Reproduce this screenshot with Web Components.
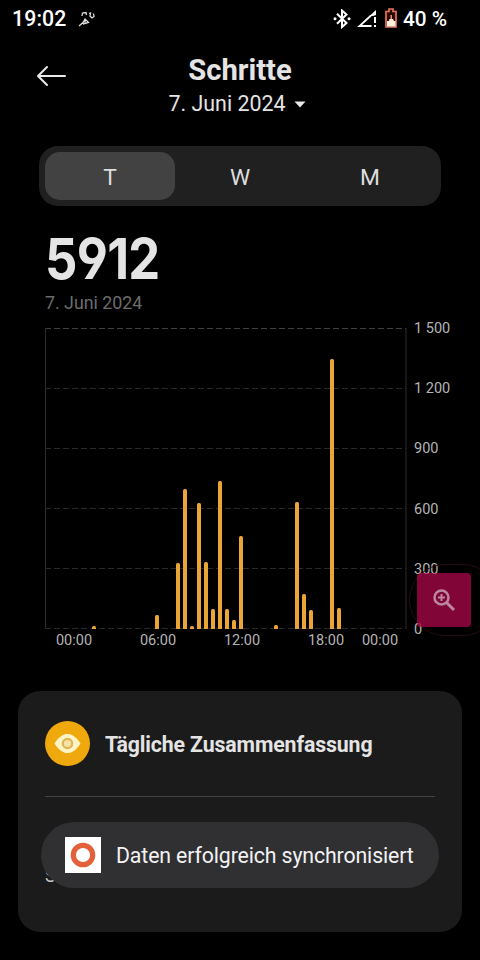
<!DOCTYPE html>
<html lang="de">
<head>
<meta charset="utf-8">
<title>Schritte</title>
<style>
  html, body { margin: 0; height: 100%; background: #000; overflow: hidden; }
  body { font-family: Roboto, "Liberation Sans", sans-serif; color: #e4e4e4; }
</style>
</head>
<body>
<steps-app></steps-app>

<script>
class StatusBar extends HTMLElement {
  constructor() {
    super();
    this.attachShadow({ mode: 'open' });
  }

  connectedCallback() {
    this.shadowRoot.innerHTML = `
      <style>
        :host {
          display: flex;
          align-items: center;
          justify-content: space-between;
          height: 38px;
          padding: 0 33px 0 12px;
          box-sizing: border-box;
          color: #fff;
          font-size: 21.3px;
          font-weight: 500;
          line-height: 38px;
        }
        div { display: flex; align-items: center; }
        .time { letter-spacing: 0.1px; }
        .run { margin-left: 11px; }
        .signal { margin: 0 8px 0 6px; }
        .battery { margin: -2px 6px 0 0; }
        .percent { font-size: 20.8px; }
        svg { display: block; }
      </style>
      <div>
        <span class="time">${this.getAttribute('time')}</span>
        <svg class="run" width="18" height="18" viewBox="0 0 18 18" fill="none" stroke="#ddd" stroke-width="1.3">
          <path d="M4 6L4.500 3L8 2.500L8.500 5M11 3.500L12.500 3L12 6L14 8L16 6.500L15.500 3.500M1 16L5 12.500L7 9L10.500 12.500L5 14M7 9V12.500"/>
        </svg>
      </div>
      <div>
        <svg width="18" height="20" viewBox="0 0 18 20" fill="none" stroke="#fff" stroke-width="2">
          <path d="M4 4.800L13.500 14L9 18V1.500L13.500 5.500L4 14.700"/>
          <circle cx="2" cy="9.800" r="1.500" fill="#fff" stroke="none"/>
          <circle cx="16" cy="9.800" r="1.500" fill="#fff" stroke="none"/>
        </svg>
        <svg class="signal" width="20" height="18" viewBox="0 0 20 18">
          <path d="M14 5.500L2.500 16H14.500" fill="none" stroke="#fff" stroke-width="1.800"/>
          <path d="M12.500 6L19 0V5L16 6ZM17 7H19V13H17ZM17 15H19V17H17Z" fill="#fff"/>
        </svg>
        <svg class="battery" width="12" height="20" viewBox="0 0 12 20">
          <path d="M1 3.500H4V1H8V3.500H11V19H1Z" fill="#2a0904" stroke="#e8745a" stroke-width="1.700"/>
          <path d="M2 13H4L4.500 11H6V9H7V11H8L9 13H10.500V18.500H2Z" fill="#fff0dc"/>
          <path d="M5.500 7H7V11H5.500Z" fill="#ee9078"/>
        </svg>
        <span class="percent">${this.getAttribute('battery')}</span>
      </div>
    `;
  }
}
customElements.define('status-bar', StatusBar);

class PageHeader extends HTMLElement {
  constructor() {
    super();
    this.attachShadow({ mode: 'open' });
  }

  connectedCallback() {
    this.shadowRoot.innerHTML = `
      <style>
        :host {
          display: grid;
          grid-template-columns: 70px 1fr 70px;
          height: 108px;
        }
        .back { display: block; margin: 27px 0 0 36px; }
        .titles { text-align: center; padding-top: 15px; }
        h1 { margin: 0; font-size: 29.2px; line-height: 34px; font-weight: 700; }
        .date {
          display: flex;
          align-items: center;
          justify-content: center;
          gap: 9px;
          padding: 1px 5px 0 0;
          font-size: 21.4px;
          line-height: 32px;
        }
      </style>
      <svg class="back" width="32" height="22" viewBox="0 0 32 22" fill="none" stroke="#e8e8e8" stroke-width="2" stroke-linecap="round" stroke-linejoin="round">
        <path d="M29 11H2M11 2L2 11L11 20"/>
      </svg>
      <div class="titles">
        <h1><slot></slot></h1>
        <div class="date">
          <slot name="date"></slot>
          <svg width="12" height="7" viewBox="0 0 12 7"><path d="M0.500 0.500H11.500L6 6.500Z" fill="#e8e8e8"/></svg>
        </div>
      </div>
    `;
  }
}
customElements.define('page-header', PageHeader);

class RangeTabs extends HTMLElement {
  constructor() {
    super();
    this.attachShadow({ mode: 'open' });
  }

  connectedCallback() {
    const tabs = this.getAttribute('tabs').split(',');
    this.shadowRoot.innerHTML = `
      <style>
        :host {
          display: grid;
          grid-template-columns: repeat(3, 1fr);
          height: 60px;
          margin: 0 39px;
          padding: 6px;
          box-sizing: border-box;
          border-radius: 19px;
          background: #202020;
          font-size: 22.8px;
          line-height: 51px;
          text-align: center;
          color: #ddd;
        }
        div { height: 48px; }
        .active { background: #424242; border-radius: 15px; }
      </style>
      ${tabs.map((t, i) => `<div class="${i === 0 ? 'active' : ''}">${t}</div>`).join('')}
    `;
  }
}
customElements.define('range-tabs', RangeTabs);

class StepTotal extends HTMLElement {
  constructor() {
    super();
    this.attachShadow({ mode: 'open' });
  }

  connectedCallback() {
    this.shadowRoot.innerHTML = `
      <style>
        :host { display: block; height: 122px; padding: 23px 45px 0; box-sizing: border-box; }
        .value {
          font-family: Inter, Roboto, sans-serif;
          font-size: 57px;
          font-weight: 700;
          font-feature-settings: "cv04", "ss01";
          line-height: 60px;
          letter-spacing: -0.8px;
          transform: scaleX(0.89);
          transform-origin: 0 0;
        }
        .date { font-size: 17.8px; line-height: 28px; color: #6c6c6c; }
      </style>
      <div class="value"><slot></slot></div>
      <div class="date"><slot name="date"></slot></div>
    `;
  }
}
customElements.define('step-total', StepTotal);

// bar heights in px, keyed by half-hour slot
const BARS = {
  3: 3.5, 12: 14.5, 15: 66, 16: 140, 17: 3.5, 18: 126, 19: 67, 20: 20,
  21: 148.5, 22: 20.5, 23: 9.5, 24: 93, 29: 4.5, 32: 127, 33: 35.5,
  34: 19, 37: 270.5, 38: 21.5
};

class StepChart extends HTMLElement {
  constructor() {
    super();
    this.attachShadow({ mode: 'open' });
  }

  connectedCallback() {
    let slots = '';
    for (let i = 0; i < 48; i++) {
      slots += BARS[i] ? `<i style="height:${BARS[i]}px"></i>` : '<b></b>';
    }
    const lines = [0.5, 60.5, 120.5, 180.5, 240.5, 300.5]
      .map((y, i) => `<line x1="0" x2="361" y1="${y}" y2="${y}" stroke="${i ? '#292929' : '#404040'}"/>`).join('');

    this.shadowRoot.innerHTML = `
      <style>
        :host {
          display: grid;
          grid-template-columns: 362px 1fr;
          grid-template-rows: 301px 24px;
          padding-left: 45px;
          height: 363px;
          box-sizing: border-box;
          font-size: 14.5px;
          color: #b4b4b4;
        }
        .plot { display: grid; }
        .plot > * { grid-area: 1 / 1; }
        .bars {
          display: grid;
          grid-template-columns: repeat(48, 7px);
          justify-items: center;
          align-items: end;
          padding-left: 24.5px;
        }
        i { width: 4px; background: #eba436; border-radius: 1.5px 1.5px 0 0; }
        .values {
          display: flex;
          flex-direction: column;
          justify-content: space-between;
          margin: -9px 0 -11px;
          padding-left: 7px;
          line-height: 20px;
          white-space: nowrap;
        }
        .hours {
          display: grid;
          grid-template-columns: repeat(4, 84px) 24px;
          margin-left: -13px;
          text-align: center;
          line-height: 23px;
        }
        .hours span:last-child { justify-self: center; }
      </style>
      <div class="plot">
        <svg width="362" height="301" fill="none" stroke-width="1">
          <g stroke-dasharray="6 3">${lines}</g>
          <path d="M0.500 0V301M361 0V301" stroke="#2c2c2c"/>
        </svg>
        <div class="bars">${slots}</div>
      </div>
      <div class="values">
        <span>1 500</span><span>1 200</span><span>900</span><span>600</span><span>300</span><span>0</span>
      </div>
      <div class="hours">
        <span>00:00</span><span>06:00</span><span>12:00</span><span>18:00</span><span>00:00</span>
      </div>
    `;
  }
}
customElements.define('step-chart', StepChart);

class SummaryCard extends HTMLElement {
  constructor() {
    super();
    this.attachShadow({ mode: 'open' });
  }

  connectedCallback() {
    this.shadowRoot.innerHTML = `
      <style>
        :host {
          display: block;
          height: 241px;
          margin: 0 18px;
          padding: 30px 27px 0;
          box-sizing: border-box;
          border-radius: 22px;
          background: #1b1b1b;
        }
        .head {
          display: flex;
          align-items: center;
          gap: 15px;
          height: 76px;
          padding-bottom: 30px;
          box-sizing: border-box;
          border-bottom: 1px solid #444;
        }
        h2 {
          margin: 0;
          padding-top: 3px;
          font-size: 21.3px;
          font-weight: 700;
          line-height: 30px;
          letter-spacing: -0.13px;
        }
        .row { padding-top: 66px; font-size: 18px; line-height: 26px; color: #c8c8c8; }
      </style>
      <div class="head">
        <svg width="45" height="45" viewBox="0 0 45 45">
          <circle cx="22.500" cy="22.500" r="22.500" fill="#f0a90c"/>
          <path d="M9.500 22.500C14 15.500 18 13 22.500 13S31 15.500 35.500 22.500C31 29.500 27 32 22.500 32S14 29.500 9.500 22.500Z" fill="#fff4c4"/>
          <circle cx="22.500" cy="22.500" r="4.700" fill="#f8e2a8" stroke="#dfb654" stroke-width="2.200"/>
        </svg>
        <h2><slot></slot></h2>
      </div>
      <div class="row"><slot name="row"></slot></div>
    `;
  }
}
customElements.define('summary-card', SummaryCard);

class ZoomButton extends HTMLElement {
  constructor() {
    super();
    this.attachShadow({ mode: 'open' });
  }

  connectedCallback() {
    this.shadowRoot.innerHTML = `
      <style>
        :host {
          position: absolute;
          left: 409px;
          top: 564px;
          width: 90px;
          height: 72px;
          box-sizing: border-box;
          border: 1px solid #250c12;
          border-radius: 36px;
          padding: 8px 7px;
        }
        div {
          display: grid;
          place-items: center;
          width: 54px;
          height: 54px;
          border-radius: 4px;
          background: rgba(208, 8, 88, 0.62);
        }
      </style>
      <div>
        <svg width="24" height="24" viewBox="0 0 24 24" fill="none" stroke="#bd87a0" stroke-width="2.500">
          <circle cx="9.500" cy="9.500" r="7"/>
          <path d="M14.500 14.500L22 22" stroke-width="3"/>
          <path d="M9.500 6V13M6 9.500H13" stroke-width="2"/>
        </svg>
      </div>
    `;
  }
}
customElements.define('zoom-button', ZoomButton);

class ToastMessage extends HTMLElement {
  constructor() {
    super();
    this.attachShadow({ mode: 'open' });
  }

  connectedCallback() {
    this.shadowRoot.innerHTML = `
      <style>
        :host {
          position: absolute;
          left: 41px;
          top: 822px;
          width: 398px;
          height: 66px;
          padding-left: 24px;
          box-sizing: border-box;
          border-radius: 33px;
          background: #303033;
          display: flex;
          align-items: center;
          gap: 15px;
          font-size: 21.3px;
          line-height: 30px;
          letter-spacing: -0.13px;
          color: #f2f2f4;
          white-space: nowrap;
        }
        span { padding-top: 2px; }
      </style>
      <svg width="36" height="36" viewBox="0 0 36 36">
        <rect width="36" height="36" fill="#fff"/>
        <circle cx="18" cy="18" r="9.700" fill="none" stroke="#e2603a" stroke-width="5.200"/>
      </svg>
      <span><slot></slot></span>
    `;
  }
}
customElements.define('toast-message', ToastMessage);

class StepsApp extends HTMLElement {
  constructor() {
    super();
    this.attachShadow({ mode: 'open' });
  }

  connectedCallback() {
    this.shadowRoot.innerHTML = `
      <style>
        :host {
          display: flex;
          flex-direction: column;
          position: relative;
          width: 480px;
          height: 960px;
          overflow: hidden;
        }
        :host > * { flex: none; }
      </style>
      <status-bar time="19:02" battery="40 %"></status-bar>
      <page-header>Schritte<span slot="date">7. Juni 2024</span></page-header>
      <range-tabs tabs="T,W,M"></range-tabs>
      <step-total>5912<span slot="date">7. Juni 2024</span></step-total>
      <step-chart></step-chart>
      <summary-card>Tägliche Zusammenfassung<span slot="row">S</span></summary-card>
      <zoom-button></zoom-button>
      <toast-message>Daten erfolgreich synchronisiert</toast-message>
    `;
  }
}
customElements.define('steps-app', StepsApp);
</script>
</body>
</html>
